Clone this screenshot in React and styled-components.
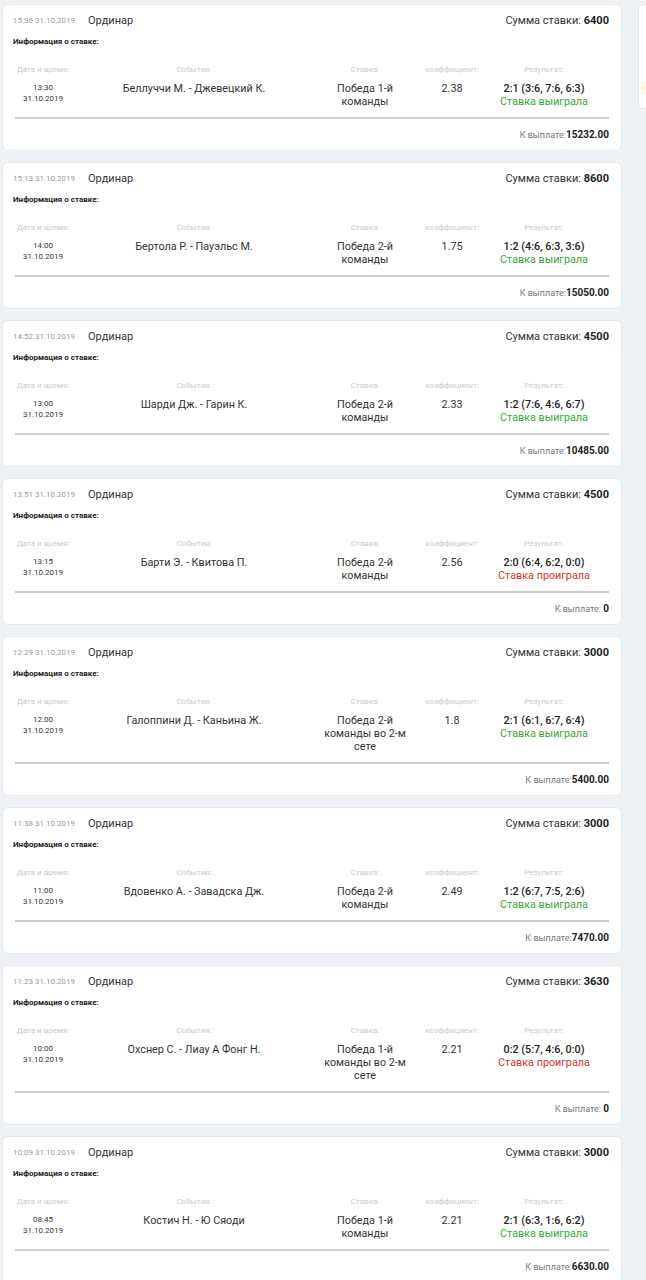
import React from "react";
import styled, { createGlobalStyle } from "styled-components";

const GlobalStyle = createGlobalStyle`
  html, body {
    margin: 0;
    padding: 0;
    background: #eef2f6;
    overflow-x: hidden;
  }
  body {
    font-family: Roboto, "Liberation Sans", Arial, sans-serif;
    color: #333;
  }
`;

const bets = [
  {
    placed: "15:36 31.10.2019",
    amount: "6400",
    time: "13:30",
    date: "31.10.2019",
    event: "Беллуччи М. - Джевецкий К.",
    pick: "Победа 1-й команды",
    coef: "2.38",
    score: "2:1 (3:6, 7:6, 6:3)",
    won: true,
    payout: "15232.00",
  },
  {
    placed: "15:13 31.10.2019",
    amount: "8600",
    time: "14:00",
    date: "31.10.2019",
    event: "Бертола Р. - Пауэльс М.",
    pick: "Победа 2-й команды",
    coef: "1.75",
    score: "1:2 (4:6, 6:3, 3:6)",
    won: true,
    payout: "15050.00",
  },
  {
    placed: "14:52 31.10.2019",
    amount: "4500",
    time: "13:00",
    date: "31.10.2019",
    event: "Шарди Дж. - Гарин К.",
    pick: "Победа 2-й команды",
    coef: "2.33",
    score: "1:2 (7:6, 4:6, 6:7)",
    won: true,
    payout: "10485.00",
  },
  {
    placed: "13:51 31.10.2019",
    amount: "4500",
    time: "13:15",
    date: "31.10.2019",
    event: "Барти Э. - Квитова П.",
    pick: "Победа 2-й команды",
    coef: "2.56",
    score: "2:0 (6:4, 6:2, 0:0)",
    won: false,
    payout: "0",
  },
  {
    placed: "12:29 31.10.2019",
    amount: "3000",
    time: "12:00",
    date: "31.10.2019",
    event: "Галоппини Д. - Каньина Ж.",
    pick: "Победа 2-й команды во 2-м сете",
    coef: "1.8",
    score: "2:1 (6:1, 6:7, 6:4)",
    won: true,
    payout: "5400.00",
  },
  {
    placed: "11:38 31.10.2019",
    amount: "3000",
    time: "11:00",
    date: "31.10.2019",
    event: "Вдовенко А. - Завадска Дж.",
    pick: "Победа 2-й команды",
    coef: "2.49",
    score: "1:2 (6:7, 7:5, 2:6)",
    won: true,
    payout: "7470.00",
  },
  {
    placed: "11:23 31.10.2019",
    amount: "3630",
    time: "10:00",
    date: "31.10.2019",
    event: "Охснер С. - Лиау А Фонг Н.",
    pick: "Победа 1-й команды во 2-м сете",
    coef: "2.21",
    score: "0:2 (5:7, 4:6, 0:0)",
    won: false,
    payout: "0",
  },
  {
    placed: "10:09 31.10.2019",
    amount: "3000",
    time: "08:45",
    date: "31.10.2019",
    event: "Костич Н. - Ю Сяоди",
    pick: "Победа 1-й команды",
    coef: "2.21",
    score: "2:1 (6:3, 1:6, 6:2)",
    won: true,
    payout: "6630.00",
  },
];

const Page = styled.div`
  display: flex;
  align-items: flex-start;
  gap: 16px;
  padding: 4px 0 0 2px;
  overflow: hidden;
`;

const List = styled.div`
  display: flex;
  flex-direction: column;
  gap: 11px;
  width: 620px;
  flex-shrink: 0;
`;

const Card = styled.div`
  background: #fff;
  border: 1px solid #e4e8ee;
  border-radius: 6px;
  padding: 7px 12px 8px 10px;
`;

const Header = styled.div`
  display: flex;
  align-items: center;
  height: 16px;
`;

const Placed = styled.span`
  font-size: 8px;
  color: #9a9a9a;
  width: 75px;
`;

const Kind = styled.span`
  font-size: 11px;
  color: #333;
  flex: 1;
`;

const Amount = styled.span`
  font-size: 11px;
  color: #333;
  b {
    font-weight: 700;
    color: #222;
  }
`;

const InfoTitle = styled.div`
  font-size: 8px;
  font-weight: 700;
  color: #222;
  line-height: 12px;
  margin-top: 8px;
`;

const Table = styled.div`
  display: grid;
  grid-template-columns: 60px 242px 100px 74px 110px;
  grid-template-rows: 12px auto;
  row-gap: 6px;
  margin-top: 16px;
  text-align: center;
`;

const Label = styled.div`
  font-size: 8px;
  line-height: 12px;
  color: #cacaca;
`;

const Cell = styled.div`
  font-size: ${(p) => (p.$small ? "8px" : "10.8px")};
  line-height: ${(p) => (p.$small ? "11px" : "13px")};
  color: #333;
  display: flex;
  flex-direction: column;
  align-items: center;
`;

const Pick = styled.span`
  max-width: 84px;
`;

const Score = styled.span`
  font-weight: 500;
  color: #222;
`;

const Outcome = styled.span`
  color: ${(p) => (p.$won ? "#3aa63a" : "#d8332b")};
`;

const Divider = styled.div`
  height: 2px;
  background: #cdcdcd;
  margin: 9px 0 0 2px;
`;

const Footer = styled.div`
  text-align: right;
  font-size: 9px;
  line-height: 14px;
  color: #777;
  margin-top: 9px;
  b {
    font-size: 10px;
    color: #222;
    font-weight: 700;
  }
`;

const Side = styled.div`
  flex: 0 0 200px;
  height: 105px;
  background: #fff;
  border: 1px solid #e4e8ee;
  border-radius: 6px;
  display: flex;
  flex-direction: column;
  justify-content: flex-end;
  padding: 0 10px 14px 2px;
  box-sizing: border-box;
`;

const SideNote = styled.div`
  height: 12px;
  background: #fdf6dc;
`;

const BetCard = ({ bet }) => (
  <Card>
    <Header>
      <Placed>{bet.placed}</Placed>
      <Kind>Ординар</Kind>
      <Amount>
        Сумма ставки: <b>{bet.amount}</b>
      </Amount>
    </Header>
    <InfoTitle>Информация о ставке:</InfoTitle>
    <Table>
      <Label>Дата и время:</Label>
      <Label>События:</Label>
      <Label>Ставка:</Label>
      <Label>коэффициент:</Label>
      <Label>Результат:</Label>
      <Cell $small>
        <span>{bet.time}</span>
        <span>{bet.date}</span>
      </Cell>
      <Cell>{bet.event}</Cell>
      <Cell>
        <Pick>{bet.pick}</Pick>
      </Cell>
      <Cell>{bet.coef}</Cell>
      <Cell>
        <Score>{bet.score}</Score>
        <Outcome $won={bet.won}>
          {bet.won ? "Ставка выиграла" : "Ставка проиграла"}
        </Outcome>
      </Cell>
    </Table>
    <Divider />
    <Footer>
      {bet.won ? "К выплате:" : "К выплате: "}
      <b>{bet.payout}</b>
    </Footer>
  </Card>
);

export default function App() {
  return (
    <>
      <GlobalStyle />
      <Page>
        <List>
          {bets.map((bet) => (
            <BetCard key={bet.placed} bet={bet} />
          ))}
        </List>
        <Side>
          <SideNote />
        </Side>
      </Page>
    </>
  );
}
